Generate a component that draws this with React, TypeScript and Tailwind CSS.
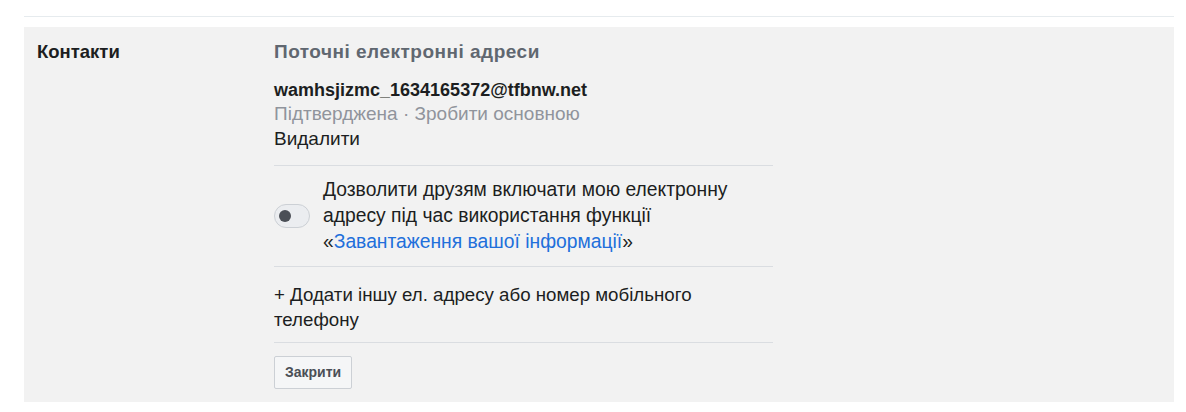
import React, { useState } from 'react';

export default function App() {
  const [allowDyi, setAllowDyi] = useState(false);

  return (
    <div className="w-[1186px] h-[412px] bg-white font-['Liberation_Sans',Arial,sans-serif] text-[#1c1e21]">
      <div className="pt-[16px] pl-[24px] pr-[12px]">
        <div className="border-t border-[#e6ebee]" />
        <div className="mt-[10px] bg-[#f2f2f2] flex pb-[13px]">
          <div className="w-[250px] pl-[13px] pt-[15px] text-[18.5px] font-bold leading-[20px]">
            Контакти
          </div>
          <div className="w-[499px] pt-[15px]">
            <div className="text-[19px] font-bold tracking-[0.5px] text-[#606770] leading-[20px]">
              Поточні електронні адреси
            </div>
            <div className="mt-[16px]">
              <div className="text-[18px] font-bold leading-[24px]">wamhsjizmc_1634165372@tfbnw.net</div>
              <div className="text-[19px] leading-[24.5px] text-[#90949c]">
                Підтверджена · <span className="text-[#90949c]">Зробити основною</span>
              </div>
              <div className="text-[19px] leading-[24.5px]">Видалити</div>
            </div>
            <div className="mt-[14px] border-t border-[#dadde1]" />
            <div className="flex items-center pt-[11px] pb-[11px]">
              <button
                type="button"
                onClick={() => setAllowDyi(!allowDyi)}
                className="relative w-[36px] h-[24px] rounded-full border border-[#ccd0d5] bg-[#ebedf0] shrink-0"
              >
                <span className="absolute left-[4px] top-[5px] w-[12px] h-[12px] rounded-full bg-[#4b4f56]" />
              </button>
              <div className="ml-[13px] text-[19.3px] leading-[26px]">
                Дозволити друзям включати мою електронну
                <br />
                адресу під час використання функції
                <br />
                «<span className="text-[#216fdb]">Завантаження вашої інформації</span>»
              </div>
            </div>
            <div className="border-t border-[#dadde1]" />
            <div className="pt-[15px] pb-[10px] text-[18.7px] leading-[25px]">
              + Додати іншу ел. адресу або номер мобільного
              <br />
              телефону
            </div>
            <div className="border-t border-[#dadde1]" />
            <button
              type="button"
              className="mt-[13px] h-[33px] px-[10px] border border-[#ccd0d5] rounded-[2px] bg-[#f5f6f7] text-[14px] font-bold text-[#4b4f56]"
            >
              Закрити
            </button>
          </div>
        </div>
      </div>
    </div>
  );
}
